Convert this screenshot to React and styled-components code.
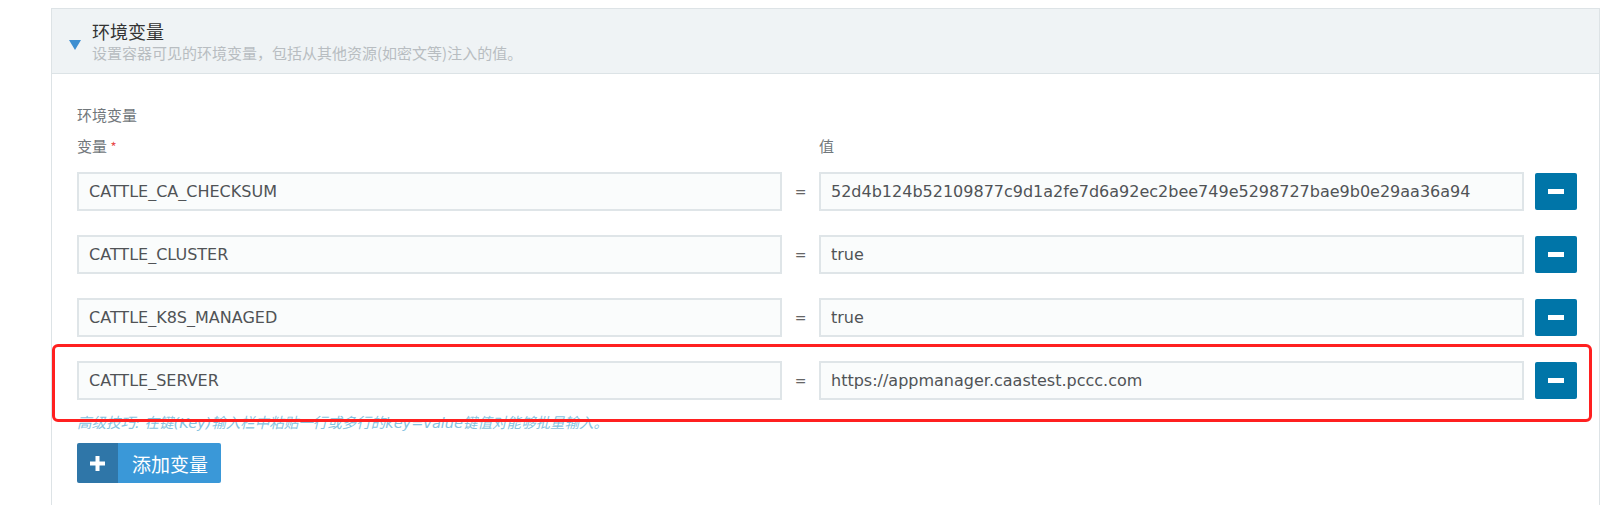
import styled, { createGlobalStyle } from "styled-components";

const envVars = [
  {
    key: "CATTLE_CA_CHECKSUM",
    value: "52d4b124b52109877c9d1a2fe7d6a92ec2bee749e5298727bae9b0e29aa36a94",
  },
  { key: "CATTLE_CLUSTER", value: "true" },
  { key: "CATTLE_K8S_MANAGED", value: "true" },
  { key: "CATTLE_SERVER", value: "https://appmanager.caastest.pccc.com" },
];

export default function App() {
  return (
    <>
      <GlobalStyle />
      <StyledPage>
        <StyledPanel>
          <StyledHeader>
            <StyledCaret />
            <div>
              <StyledTitle>环境变量</StyledTitle>
              <StyledSubtitle>
                设置容器可见的环境变量，包括从其他资源(如密文等)注入的值。
              </StyledSubtitle>
            </div>
          </StyledHeader>
          <StyledBody>
            <StyledSectionLabel>环境变量</StyledSectionLabel>
            <StyledColumns>
              <StyledLabel>
                变量 <StyledRequired>*</StyledRequired>
              </StyledLabel>
              <span />
              <StyledLabel>值</StyledLabel>
              <span />
            </StyledColumns>
            <StyledRows>
              {envVars.map((item) => (
                <StyledRow key={item.key}>
                  <StyledInput readOnly value={item.key} />
                  <StyledEquals>=</StyledEquals>
                  <StyledInput readOnly value={item.value} />
                  <StyledRemove aria-label="删除">
                    <span />
                  </StyledRemove>
                </StyledRow>
              ))}
            </StyledRows>
            <StyledHelp>
              高级技巧: 在键(Key)输入栏中粘贴一行或多行的key=value键值对能够批量输入。
            </StyledHelp>
            <StyledAddButton>
              <StyledAddIcon>
                <svg width="15" height="15" viewBox="0 0 15 15">
                  <rect x="5.5" y="0" width="4" height="15" fill="#fff" />
                  <rect x="0" y="5.5" width="15" height="4" fill="#fff" />
                </svg>
              </StyledAddIcon>
              <StyledAddText>添加变量</StyledAddText>
            </StyledAddButton>
          </StyledBody>
        </StyledPanel>
        <StyledHighlight />
      </StyledPage>
    </>
  );
}

const latin = `"DejaVu Sans", "Noto Sans CJK SC", sans-serif`;

const GlobalStyle = createGlobalStyle`
  body {
    margin: 0;
    background: #fff;
    font-family: ${latin};
    color: #333;
  }
  * {
    box-sizing: border-box;
  }
`;

const StyledPage = styled.div`
  position: relative;
  width: 1609px;
  height: 505px;
  overflow: hidden;
  padding: 8px 9px 0 51px;
`;

const StyledPanel = styled.section`
  border: 1px solid #dde3e6;
  border-bottom: none;
  height: 520px;
`;

const StyledHeader = styled.div`
  display: flex;
  align-items: center;
  height: 65px;
  padding-left: 17px;
  background-color: #eff3f5;
  border-bottom: 1px solid #dce3e6;
`;

const StyledCaret = styled.span`
  width: 0;
  height: 0;
  margin: 8px 11px 0 0;
  border-left: 6px solid transparent;
  border-right: 6px solid transparent;
  border-top: 10px solid #3d8fd1;
`;

const StyledTitle = styled.div`
  font-family: "Noto Sans CJK SC", sans-serif;
  font-size: 18px;
  line-height: 24px;
  color: #333;
`;

const StyledSubtitle = styled.div`
  font-family: "Noto Sans CJK SC", sans-serif;
  font-size: 15px;
  line-height: 20px;
  color: #b8bdc1;
`;

const StyledBody = styled.div`
  padding: 30px 22px 0 25px;
`;

const StyledSectionLabel = styled.div`
  font-family: "Noto Sans CJK SC", sans-serif;
  font-size: 15px;
  line-height: 21px;
  color: #71777b;
  margin-bottom: 10px;
`;

const StyledColumns = styled.div`
  display: grid;
  grid-template-columns: 1fr 37px 1fr 53px;
  margin-bottom: 15px;
`;

const StyledLabel = styled.div`
  font-family: "Noto Sans CJK SC", sans-serif;
  font-size: 15px;
  line-height: 21px;
  color: #71777b;
`;

const StyledRequired = styled.span`
  color: #e84b4b;
  font-size: 13px;
`;

const StyledRows = styled.div`
  display: flex;
  flex-direction: column;
  gap: 24px;
`;

const StyledRow = styled.div`
  display: grid;
  grid-template-columns: 1fr 37px 1fr 53px;
  align-items: center;
`;

const StyledInput = styled.input`
  height: 39px;
  width: 100%;
  padding: 0 10px;
  border: 2px solid #dfe5e8;
  background-color: #fafcfc;
  font-family: ${latin};
  font-size: 16px;
  color: #505356;
  outline: none;
`;

const StyledEquals = styled.span`
  text-align: center;
  font-size: 14px;
  color: #666;
`;

const StyledRemove = styled.button`
  justify-self: end;
  display: flex;
  align-items: center;
  justify-content: center;
  width: 42px;
  height: 37px;
  border: none;
  border-radius: 2px;
  background-color: #0075a8;
  cursor: pointer;

  span {
    width: 16px;
    height: 5px;
    background-color: #fff;
  }
`;

const StyledHelp = styled.div`
  margin-top: 13px;
  font-size: 14.5px;
  line-height: 20px;
  font-style: italic;
  color: #86c3e0;
`;

const StyledAddButton = styled.button`
  display: flex;
  margin-top: 10px;
  height: 40px;
  padding: 0;
  border: none;
  border-radius: 2px;
  overflow: hidden;
  cursor: pointer;
`;

const StyledAddIcon = styled.span`
  display: flex;
  align-items: center;
  justify-content: center;
  width: 41px;
  height: 100%;
  background-color: #2f76a8;
`;

const StyledAddText = styled.span`
  display: flex;
  align-items: center;
  height: 100%;
  padding: 0 13px 0 14px;
  background-color: #3a98d8;
  color: #fff;
  font-family: "Noto Sans CJK SC", sans-serif;
  font-size: 19px;
`;

const StyledHighlight = styled.div`
  position: absolute;
  left: 52px;
  top: 344px;
  width: 1540px;
  height: 78px;
  border: 3px solid #ff2020;
  border-radius: 6px;
  pointer-events: none;
`;
